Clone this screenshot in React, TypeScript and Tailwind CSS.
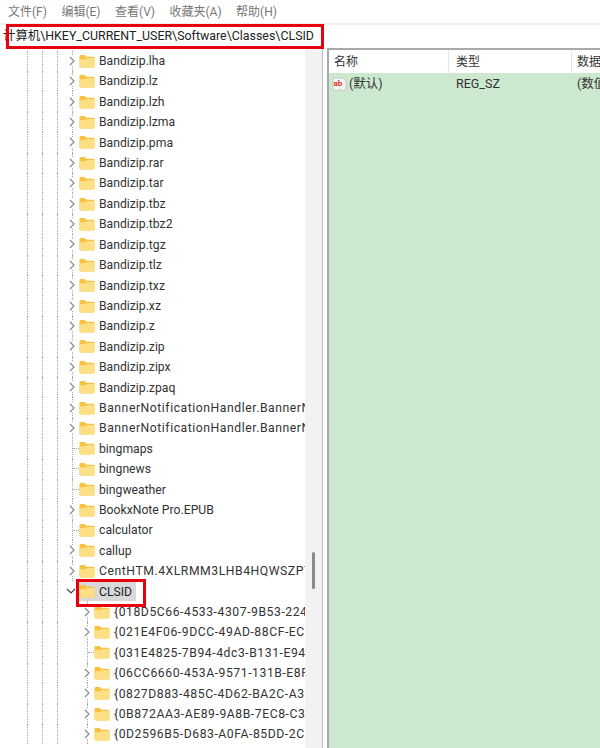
import React from 'react';

const menus = ['文件(F)', '编辑(E)', '查看(V)', '收藏夹(A)', '帮助(H)'];

// kind: c = has chevron, l = leaf with dotted connector
const rows: [string, 'c' | 'l'][] = [
  ['Bandizip.lha', 'c'], ['Bandizip.lz', 'c'], ['Bandizip.lzh', 'c'], ['Bandizip.lzma', 'c'],
  ['Bandizip.pma', 'c'], ['Bandizip.rar', 'c'], ['Bandizip.tar', 'c'], ['Bandizip.tbz', 'c'],
  ['Bandizip.tbz2', 'c'], ['Bandizip.tgz', 'c'], ['Bandizip.tlz', 'c'], ['Bandizip.txz', 'c'],
  ['Bandizip.xz', 'c'], ['Bandizip.z', 'c'], ['Bandizip.zip', 'c'], ['Bandizip.zipx', 'c'],
  ['Bandizip.zpaq', 'c'], ['BannerNotificationHandler.BannerNotificationHandler', 'c'],
  ['BannerNotificationHandler.BannerNotificationHandler', 'c'], ['bingmaps', 'l'], ['bingnews', 'l'],
  ['bingweather', 'l'], ['BookxNote Pro.EPUB', 'c'], ['calculator', 'l'], ['callup', 'c'],
  ['CentHTM.4XLRMM3LHB4HQWSZP7AU', 'c'],
];

const children: [string, 'c' | 'l'][] = [
  ['{018D5C66-4533-4307-9B53-224DE2ED1FE6}', 'c'],
  ['{021E4F06-9DCC-49AD-88CF-ECC2DA314C8A}', 'c'],
  ['{031E4825-7B94-4dc3-B131-E946B44C8DD5}', 'l'],
  ['{06CC6660-453A-9571-131B-E8FE1B2C3D4E}', 'c'],
  ['{0827D883-485C-4D62-BA2C-A332DBF3D4B0}', 'c'],
  ['{0B872AA3-AE89-9A8B-7EC8-C3E1F2A4B5C6}', 'c'],
  ['{0D2596B5-D683-A0FA-85DD-2C8F1E3D4A5B}', 'c'],
];

const Folder = () => (
  <svg width="16" height="14" viewBox="0 0 16 14" className="shrink-0">
    <path d="M0.5 2.2 Q0.5 1 1.7 1 H5.6 L7.4 2.8 H14.4 Q15.5 2.8 15.5 4 V12.3 Q15.5 13.4 14.4 13.4 H1.7 Q0.5 13.4 0.5 12.3 Z" fill="#f5c242" />
    <path d="M0.5 5.2 L6.4 5.2 L8 3.9 H14.4 Q15.5 3.9 15.5 5 V12.3 Q15.5 13.4 14.4 13.4 H1.7 Q0.5 13.4 0.5 12.3 Z" fill="#fddf85" />
  </svg>
);

const Chevron = ({ open }: { open?: boolean }) => (
  <svg width="10" height="10" viewBox="0 0 10 10" className="shrink-0">
    {open ? (
      <path d="M1 3 L5 7 L9 3" fill="none" stroke="#444" strokeWidth="1.2" />
    ) : (
      <path d="M3 1 L7 5 L3 9" fill="none" stroke="#8a8a8a" strokeWidth="1.2" />
    )}
  </svg>
);

const Guide = ({ off }: { off?: boolean }) => (
  <span className={off ? 'w-[15px] h-full shrink-0' : 'w-[15px] h-full shrink-0 border-l border-dotted border-[#a8a8a8]'} />
);

const Row = ({ name, kind, child, open, selected }: { name: string; kind: 'c' | 'l'; child?: boolean; open?: boolean; selected?: boolean }) => {
  const wide = name.startsWith('{') || name.startsWith('Cent') || name.startsWith('Banner');
  return (
    <div className="flex items-center h-[20.42px] whitespace-nowrap">
      <span className="w-[27px] h-full shrink-0" />
      <Guide />
      <Guide />
      <Guide />
      {child && <Guide off />}
      <span className={open ? 'relative w-[7px] h-full shrink-0 flex items-center' : 'relative w-[7px] h-full shrink-0 flex items-center border-l border-dotted border-[#a8a8a8]'}>
        {kind === 'c' ? (
          <span className="absolute -left-[6px] flex bg-white"><Chevron open={open} /></span>
        ) : (
          <span className="w-full border-t border-dotted border-[#a8a8a8]" />
        )}
      </span>
      {selected ? (
        <span className="flex items-center bg-[#d9d9d9] h-full pr-[4px]">
          <Folder />
          <span className="ml-[4px] pt-[1px] text-[#222]">{name}</span>
        </span>
      ) : (
        <>
          <Folder />
          <span className={wide ? 'ml-[4px] pt-[1px] text-[#333] tracking-[0.55px]' : 'ml-[4px] pt-[1px] text-[#333]'}>{name}</span>
        </>
      )}
    </div>
  );
};

export default function App() {
  return (
    <div className="relative w-[600px] h-[748px] overflow-hidden bg-white text-[12.2px] text-[#333] font-['Roboto','Noto_Sans_CJK_SC',sans-serif]">
      <div className="flex h-[23px] items-center gap-[14.5px] pl-[8px] text-[12px] text-[#777]">
        {menus.map((m) => (
          <span key={m}>{m}</span>
        ))}
      </div>
      <div className="flex h-[25px] items-center pl-[3px] overflow-hidden border-t-2 border-[#efefef] whitespace-nowrap text-[12.4px] text-[#222]">
        <span>计算机\HKEY_CURRENT_USER\Software\Classes\CLSID</span>
      </div>
      <div className="flex h-[700px]">
        <div className="flex w-[323px] shrink-0 border-r border-[#bdbdbd]">
          <div className="w-[305px] shrink-0 overflow-hidden pt-[2.5px]">
            {rows.map(([n, k], i) => (
              <Row key={i} name={n} kind={k} />
            ))}
            <Row name="CLSID" kind="c" open selected />
            {children.map(([n, k], i) => (
              <Row key={i} name={n} kind={k} child />
            ))}
          </div>
          <div className="flex-1 bg-[#f2f2f2] pt-[504px] pl-[7px]">
            <div className="w-[3px] h-[37px] bg-[#8a8a8a] rounded-full" />
          </div>
        </div>
        <div className="w-[4px] shrink-0" />
        <div className="flex-1 flex flex-col border-l-2 border-t-2 border-[#a9a9a9] min-w-0">
          <div className="flex h-[23px] shrink-0 items-center text-[12px] text-[#333] whitespace-nowrap">
            <span className="w-[120px] shrink-0 pl-[5px] h-full flex items-center border-r border-[#e5e5e5]">名称</span>
            <span className="w-[123px] shrink-0 pl-[7px] h-full flex items-center border-r border-[#e5e5e5]">类型</span>
            <span className="pl-[5px]">数据</span>
          </div>
          <div className="flex-1 bg-[#cce8cf] pt-[1px]">
            <div className="flex h-[20px] items-center whitespace-nowrap text-[12.5px]">
              <span className="w-[120px] shrink-0 pl-[3px] flex items-center gap-[2px]">
                <svg width="15" height="15" viewBox="0 0 15 15" className="shrink-0">
                  <path d="M1 1 H11 L14 4 V12 L11 14 L8 12 L4 14 L1 12 Z" fill="#f4f4f4" stroke="#bbb" strokeWidth="0.7" />
                  <text x="1.5" y="8.5" fontSize="8" fontWeight="700" fill="#d8312a">ab</text>
                </svg>
                (默认)
              </span>
              <span className="w-[123px] shrink-0 pl-[7px]">REG_SZ</span>
              <span className="pl-[5px]">(数值未设置)</span>
            </div>
          </div>
        </div>
      </div>
      <div className="absolute left-[6px] top-[24px] w-[318px] h-[25px] border-[3px] border-[#e8000f]" />
      <div className="absolute left-[76px] top-[579px] w-[70px] h-[28px] border-[3px] border-[#e8000f]" />
    </div>
  );
}
